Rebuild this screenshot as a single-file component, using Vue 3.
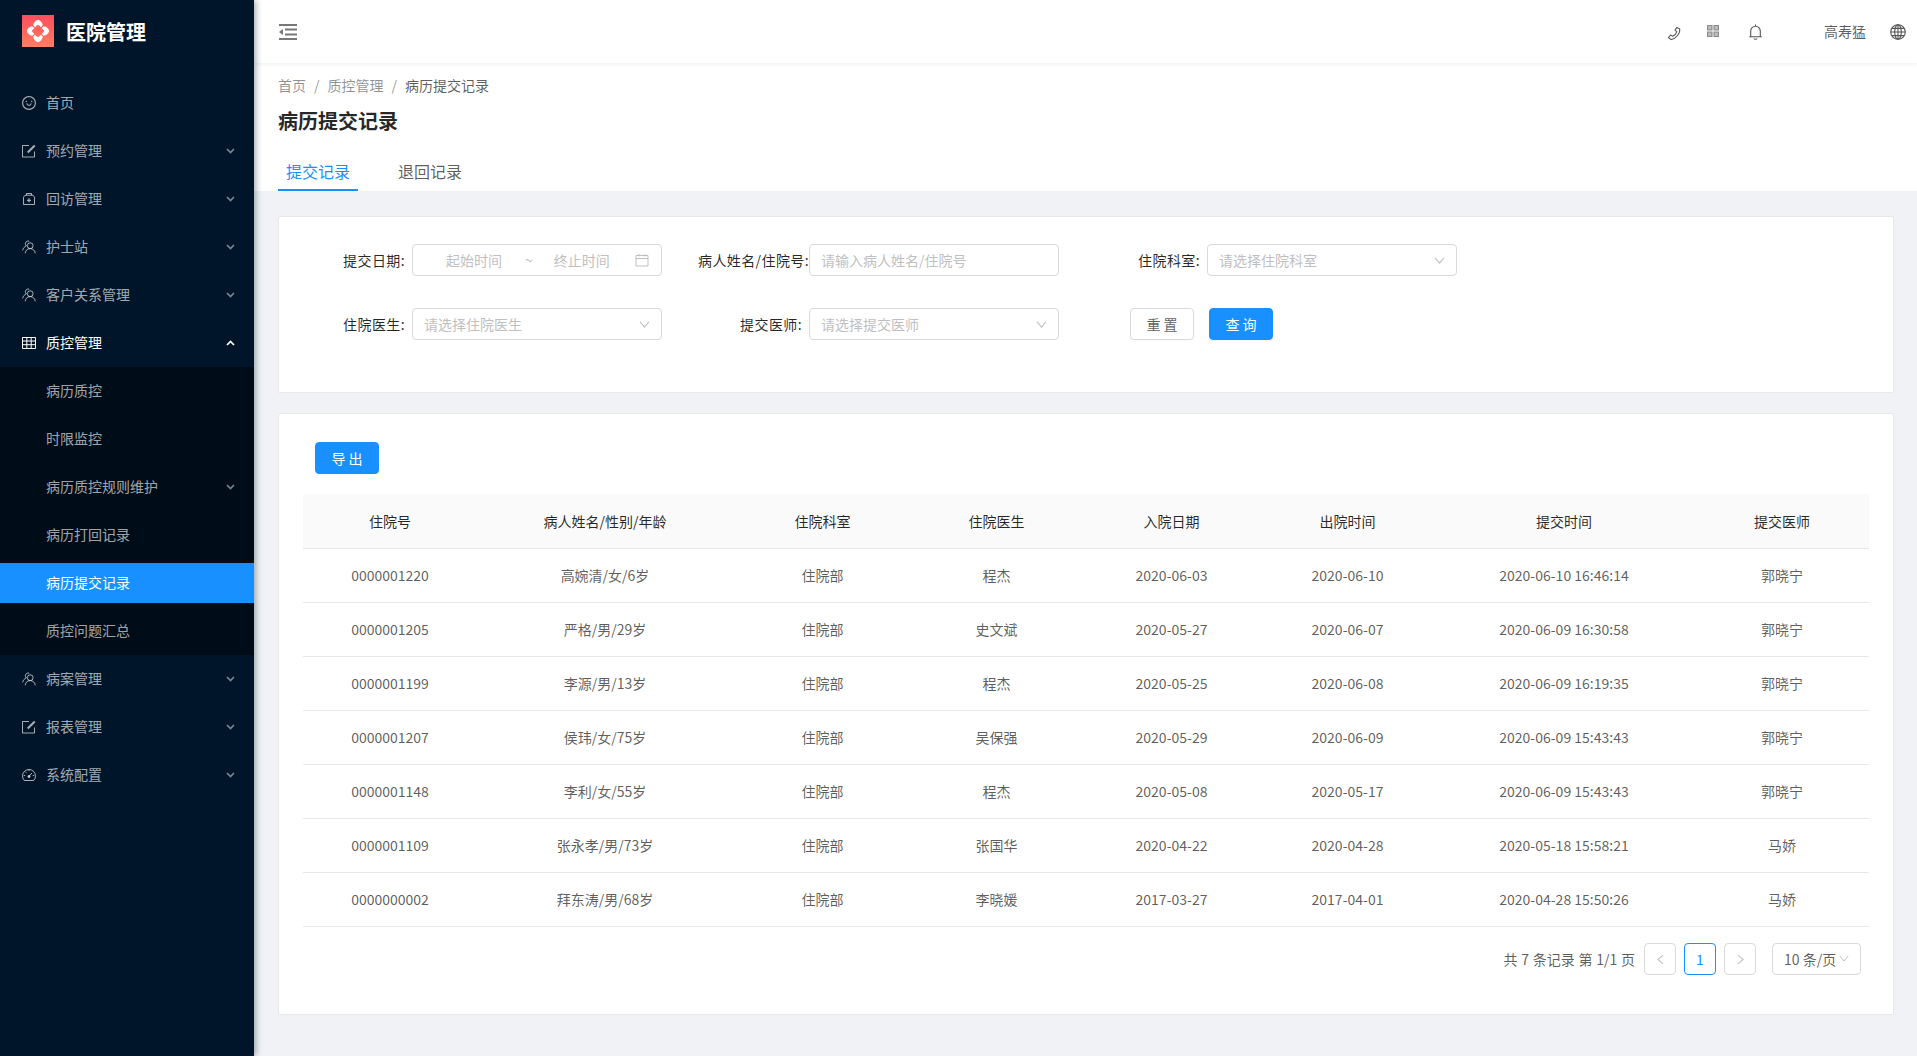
<script setup>
const menuTop = [
  { label: '首页', icon: 'smile' },
  { label: '预约管理', icon: 'form', arrow: true },
  { label: '回访管理', icon: 'medicine', arrow: true },
  { label: '护士站', icon: 'team', arrow: true },
  { label: '客户关系管理', icon: 'team', arrow: true },
]
const subMenu = [
  { label: '病历质控' },
  { label: '时限监控' },
  { label: '病历质控规则维护', arrow: true },
  { label: '病历打回记录' },
  { label: '病历提交记录', active: true },
  { label: '质控问题汇总' },
]
const menuBottom = [
  { label: '病案管理', icon: 'team', arrow: true },
  { label: '报表管理', icon: 'form', arrow: true },
  { label: '系统配置', icon: 'dashboard', arrow: true },
]
const columns = ['住院号', '病人姓名/性别/年龄', '住院科室', '住院医生', '入院日期', '出院时间', '提交时间', '提交医师']
const rows = [
  ['0000001220', '高婉清/女/6岁', '住院部', '程杰', '2020-06-03', '2020-06-10', '2020-06-10 16:46:14', '郭晓宁'],
  ['0000001205', '严格/男/29岁', '住院部', '史文斌', '2020-05-27', '2020-06-07', '2020-06-09 16:30:58', '郭晓宁'],
  ['0000001199', '李源/男/13岁', '住院部', '程杰', '2020-05-25', '2020-06-08', '2020-06-09 16:19:35', '郭晓宁'],
  ['0000001207', '侯玮/女/75岁', '住院部', '吴保强', '2020-05-29', '2020-06-09', '2020-06-09 15:43:43', '郭晓宁'],
  ['0000001148', '李利/女/55岁', '住院部', '程杰', '2020-05-08', '2020-05-17', '2020-06-09 15:43:43', '郭晓宁'],
  ['0000001109', '张永孝/男/73岁', '住院部', '张国华', '2020-04-22', '2020-04-28', '2020-05-18 15:58:21', '马娇'],
  ['0000000002', '拜东涛/男/68岁', '住院部', '李晓媛', '2017-03-27', '2017-04-01', '2020-04-28 15:50:26', '马娇'],
]
const smile = 'M288 421a48 48 0 1 0 96 0 48 48 0 1 0-96 0zm352 0a48 48 0 1 0 96 0 48 48 0 1 0-96 0zM512 64C264.6 64 64 264.6 64 512s200.6 448 448 448 448-200.6 448-448S759.4 64 512 64zm263 711c-34.2 34.2-74 61-118.3 79.8C611 874.2 562.3 884 512 884c-50.3 0-99-9.8-144.8-29.2A370.4 370.4 0 0 1 248.9 775c-34.2-34.2-61-74-79.8-118.3C149.8 611 140 562.3 140 512s9.8-99 29.2-144.8A370.4 370.4 0 0 1 249 248.9c34.2-34.2 74-61 118.3-79.8C413 149.8 461.7 140 512 140c50.3 0 99 9.8 144.8 29.2A370.4 370.4 0 0 1 775.1 249c34.2 34.2 61 74 79.8 118.3C874.2 413 884 461.7 884 512s-9.8 99-29.2 144.8A368.89 368.89 0 0 1 775 775zM664 533h-48.1c-4.2 0-7.8 3.2-8.1 7.4C604 589.9 562.5 629 512 629s-92.1-39.1-95.8-88.6c-.3-4.2-3.9-7.4-8.1-7.4H360a8 8 0 0 0-8 8.4c4.4 84.3 74.5 151.6 160 151.6s155.6-67.3 160-151.6a8 8 0 0 0-8-8.4z'
const petal = 'M11.200 10.200C11.500 7.800 13.600 5.400 16 4.800C18.400 5.400 20.500 7.800 20.800 10.200L19 12.300C18 11.300 17 10.400 16 9.800C15 10.400 14 11.300 13 12.300z'
</script>

<template>
  <div class="layout">
    <aside class="sider">
      <div class="logo">
        <svg class="logo-mark" viewBox="0 0 32 32">
          <defs>
            <linearGradient id="lg" x1="0" y1="0" x2="0" y2="1">
              <stop offset="0" stop-color="#ff4d5e" />
              <stop offset="1" stop-color="#ff7f62" />
            </linearGradient>
          </defs>
          <rect width="32" height="32" fill="url(#lg)" />
          <path fill="#fff" :d="petal" />
          <path fill="#fff" :d="petal" transform="rotate(90 16 16)" />
          <path fill="#fff" :d="petal" transform="rotate(180 16 16)" />
          <path fill="#fff" :d="petal" transform="rotate(270 16 16)" />
        </svg>
        <h1>医院管理</h1>
      </div>
      <nav class="menu">
        <div v-for="m in menuTop" :key="m.label" class="item">
          <svg class="mi" viewBox="0 0 14 14">
            <template v-if="m.icon === 'smile'"><path transform="translate(-.95 -.95) scale(.01553)" fill="currentColor" stroke="none" :d="smile" /></template>
            <template v-else-if="m.icon === 'form'"><path d="M12.500 7.500v5.500H.5V1.500h6.500" /><path d="M5.700 8.500L12.700 1.500" stroke-width="2" /></template>
            <template v-else-if="m.icon === 'medicine'"><path d="M4.500 3.200V1.500h5v1.700" /><path d="M3 3.200h8l1.500 2v7.300h-11V5.200z" /><path d="M7 6.300v4M5 8.300h4" stroke-width="1.300" /></template>
            <template v-else><circle cx="8.200" cy="5.700" r="2.900" /><path d="M3.200 13.300c.3-2.900 2.300-4.700 5-4.700s4.700 1.800 5 4.700M7.300 1.300C5.700.4 3.500 1.500 3.400 3.600c0 .9.300 1.700.9 2.200C2.400 6.600 1 8.200.7 10.400" /></template>
          </svg>
          <span class="lbl">{{ m.label }}</span>
          <svg v-if="m.arrow" class="ar" viewBox="0 0 9 6"><path d="M1 1l3.500 3.500L8 1" /></svg>
        </div>
        <div class="item open">
          <svg class="mi" viewBox="0 0 14 14"><path d="M.5 1.500h13v11H.5zM.5 5h13M.5 8.700h13M4.800 1.500v11M9.200 1.500v11" /></svg>
          <span class="lbl">质控管理</span>
          <svg class="ar up" viewBox="0 0 9 6"><path d="M1 1l3.500 3.500L8 1" /></svg>
        </div>
        <div class="sub">
          <div v-for="s in subMenu" :key="s.label" class="item subitem" :class="{ active: s.active }">
            <span class="lbl">{{ s.label }}</span>
            <svg v-if="s.arrow" class="ar" viewBox="0 0 9 6"><path d="M1 1l3.500 3.500L8 1" /></svg>
          </div>
        </div>
        <div v-for="m in menuBottom" :key="m.label" class="item">
          <svg class="mi" viewBox="0 0 14 14">
            <template v-if="m.icon === 'form'"><path d="M12.500 7.500v5.500H.5V1.500h6.500" /><path d="M5.700 8.500L12.700 1.500" stroke-width="2" /></template>
            <template v-else-if="m.icon === 'team'"><circle cx="8.200" cy="5.700" r="2.900" /><path d="M3.200 13.300c.3-2.900 2.300-4.700 5-4.700s4.700 1.800 5 4.700M7.300 1.300C5.700.4 3.500 1.500 3.400 3.600c0 .9.300 1.700.9 2.200C2.400 6.600 1 8.200.7 10.400" /></template>
            <template v-else><path d="M2.300 12.500A6.500 6.500 0 1 1 11.700 12.500z" /><path d="M7 8.200l3-3.200M7 1.500v1.400M1.800 7.500h1.400M10.800 7.500h1.400M3.300 3.700l1 1" /><circle cx="7" cy="8.500" r="1" fill="currentColor" /></template>
          </svg>
          <span class="lbl">{{ m.label }}</span>
          <svg class="ar" viewBox="0 0 9 6"><path d="M1 1l3.500 3.500L8 1" /></svg>
        </div>
      </nav>
    </aside>

    <main class="main">
      <header class="topbar">
        <svg class="fold" viewBox="0 0 18 16"><path d="M0 0h18v2H0zM0 14h18v2H0zM6 4.500h12v2H6zM6 9.500h12v2H6zM4 5v6L0 8z" /></svg>
        <div class="top-right">
          <svg class="ti phone" viewBox="0 0 16 16"><path d="M10.500 1.500L13.500 3C14.500 7 10 13.500 4.500 14.500L1.500 12.500L4 9.500L6 11C8 10 10 8 10.500 6L8.500 4.500z" /></svg>
          <svg class="ti apps" viewBox="0 0 12 12"><path d="M.5.500H5V5H.500zM7 .5h4.500V5H7zM.5 7H5v4.500H.5zM7 7h4.500v4.500H7z" /></svg>
          <svg class="ti bell" viewBox="0 0 13 16"><path d="M1.700 12.500V7a4.800 4.800 0 0 1 9.600 0v5.500M.2 12.800h12.600M6.500 2V.5M5 14.300c.4 1.300 2.600 1.300 3 0" /></svg>
          <span class="user">高寿猛</span>
          <svg class="ti globe" viewBox="0 0 16 16"><circle cx="8" cy="8" r="7.300" /><ellipse cx="8" cy="8" rx="3.300" ry="7.300" /><path d="M8 .7v14.600M.7 8h14.600M1.700 4.400h12.600M1.700 11.600h12.600" /></svg>
        </div>
      </header>

      <section class="page-head">
        <div class="crumb"><span>首页</span><i>/</i><span>质控管理</span><i>/</i><span class="cur">病历提交记录</span></div>
        <h2>病历提交记录</h2>
        <div class="tabs">
          <div class="tab on">提交记录</div>
          <div class="tab">退回记录</div>
        </div>
      </section>

      <div class="content">
        <section class="card search">
          <div class="form">
            <div class="fi">
              <label>提交日期:</label>
              <div class="ctl range">
                <span class="ph rs">起始时间</span><span class="tilde">~</span><span class="ph re">终止时间</span>
                <svg class="cal" viewBox="0 0 14 14"><path d="M1 2.500h12v10.500H1zM1 5.500h12M4 1v2.500M10 1v2.500" /></svg>
              </div>
            </div>
            <div class="fi">
              <label class="wide">病人姓名/住院号:</label>
              <div class="ctl"><span class="ph">请输入病人姓名/住院号</span></div>
            </div>
            <div class="fi">
              <label>住院科室:</label>
              <div class="ctl sel"><span class="ph">请选择住院科室</span><svg class="dn" viewBox="0 0 12 8"><path d="M1 1l5 6 5-6" /></svg></div>
            </div>
            <div class="fi">
              <label>住院医生:</label>
              <div class="ctl sel"><span class="ph">请选择住院医生</span><svg class="dn" viewBox="0 0 12 8"><path d="M1 1l5 6 5-6" /></svg></div>
            </div>
            <div class="fi">
              <label>提交医师:</label>
              <div class="ctl sel"><span class="ph">请选择提交医师</span><svg class="dn" viewBox="0 0 12 8"><path d="M1 1l5 6 5-6" /></svg></div>
            </div>
            <div class="btns">
              <button class="btn">重 置</button>
              <button class="btn primary">查 询</button>
            </div>
          </div>
        </section>

        <section class="card result">
          <button class="btn primary export">导 出</button>
          <table>
            <colgroup>
              <col class="c1" /><col class="c2" /><col class="c3" /><col class="c4" /><col class="c5" /><col class="c6" /><col class="c7" /><col class="c8" />
            </colgroup>
            <thead>
              <tr><th v-for="c in columns" :key="c">{{ c }}</th></tr>
            </thead>
            <tbody>
              <tr v-for="r in rows" :key="r[0]"><td v-for="(v, i) in r" :key="i">{{ v }}</td></tr>
            </tbody>
          </table>
          <div class="pager">
            <span class="total">共 7 条记录 第 1/1 页</span>
            <span class="pg"><svg viewBox="0 0 8 12"><path d="M7 1L1 6l6 5" /></svg></span>
            <span class="pg cur-pg">1</span>
            <span class="pg"><svg viewBox="0 0 8 12"><path d="M1 1l6 5-6 5" /></svg></span>
            <span class="size">10 条/页<svg viewBox="0 0 12 8"><path d="M1 1l5 6 5-6" /></svg></span>
          </div>
        </section>
      </div>
    </main>
  </div>
</template>

<style>
html, body { margin: 0; padding: 0; background: #f0f2f5; }
</style>

<style scoped>
* { box-sizing: border-box; }
.layout {
  display: flex;
  width: 1917px;
  height: 1056px;
  overflow: hidden;
  font-family: "Noto Sans CJK SC", "Liberation Sans", sans-serif;
  font-size: 14px;
  color: rgba(0, 0, 0, .65);
  background: #f0f2f5;
}
.sider {
  width: 254px;
  flex: none;
  background: #001529;
  box-shadow: 2px 0 6px rgba(0, 21, 41, .35);
  position: relative;
  z-index: 2;
}
.logo {
  height: 64px;
  padding: 15px 0 0 22px;
  display: flex;
  gap: 12px;
}
.logo-mark { width: 32px; height: 32px; flex: none; }
.logo h1 {
  margin: 1px 0 0;
  color: #fff;
  font-size: 20px;
  font-weight: 700;
  line-height: 32px;
}
.menu { padding-top: 19px; }
.item {
  height: 40px;
  margin-bottom: 8px;
  padding-left: 22px;
  padding-right: 19px;
  display: flex;
  align-items: center;
  color: rgba(255, 255, 255, .65);
  line-height: 40px;
}
.item.open { color: #fff; margin-bottom: 4px; }
.mi {
  width: 14px;
  height: 14px;
  margin-right: 10px;
  flex: none;
  fill: none;
  stroke: currentColor;
  stroke-width: 1;
}
.lbl { flex: 1; line-height: 38px; height: 40px; }
.ar {
  width: 9px;
  height: 6px;
  flex: none;
  fill: none;
  stroke: currentColor;
  stroke-width: 1.700;
  opacity: .75;
}
.ar.up { transform: rotate(180deg); opacity: 1; }
.sub { background: #000c17; padding-top: 4px; margin-bottom: 4px; height: 288px; }
.subitem { padding-left: 46px; }
.subitem:last-child { margin-bottom: 0; }
.subitem.active { background: #1890ff; color: #fff; }

.main { flex: 1; min-width: 0; display: flex; flex-direction: column; }
.topbar {
  height: 63px;
  flex: none;
  background: #fff;
  box-shadow: 0 1px 4px rgba(0, 21, 41, .08);
  display: flex;
  align-items: center;
  padding-left: 25px;
  position: relative;
  z-index: 1;
}
.fold { width: 18px; height: 16px; fill: #777; margin-top: 1px; }
.top-right { margin-left: auto; display: flex; align-items: center; height: 100%; }
.ti { fill: none; stroke: #555; stroke-width: 1.100; flex: none; }
.phone { width: 15px; height: 15px; margin-top: 3px; }
.apps { width: 12px; height: 12px; margin-left: 25px; margin-top: -1px; stroke: #8a8a8a; fill: #bbb; }
.bell { width: 13px; height: 16px; margin-left: 30px; margin-top: 1px; }
.user { margin-left: 62px; color: rgba(0, 0, 0, .65); padding-bottom: 1px; }
.globe { width: 16px; height: 16px; margin-left: 24px; margin-right: 11px; margin-top: 1px; }

.page-head { background: #fff; padding: 11px 0 0 24px; height: 128px; flex: none; }
.crumb { height: 22px; line-height: 22px; color: rgba(0, 0, 0, .45); }
.crumb i { font-style: normal; margin: 0 8px; }
.crumb .cur { color: rgba(0, 0, 0, .65); }
.page-head h2 {
  margin: 9px 0 0;
  font-size: 20px;
  font-weight: 700;
  line-height: 32px;
  color: rgba(0, 0, 0, .85);
}
.tabs { display: flex; gap: 32px; margin-top: 16px; }
.tab {
  padding: 0 8px;
  height: 38px;
  line-height: 36px;
  font-size: 16px;
  color: rgba(0, 0, 0, .65);
}
.tab.on { color: #1890ff; border-bottom: 2px solid #1890ff; }

.content { flex: 1; padding: 25px 23px 0 24px; display: flex; flex-direction: column; gap: 20px; }
.card { background: #fff; border: 1px solid #e8e8e8; border-radius: 2px; flex: none; }
.search { height: 177px; padding: 27px 0 0; }
.form {
  display: grid;
  grid-template-columns: 397px 398px 397px;
  row-gap: 32px;
}
.fi { display: flex; align-items: center; height: 32px; }
.fi label {
  width: 126px;
  margin-right: 7px;
  text-align: right;
  color: rgba(0, 0, 0, .85);
  white-space: nowrap;
  flex: none;
  padding-bottom: 1px;
  letter-spacing: .4px;
}
.fi label.wide { margin-right: 0; width: 133px; }
.ctl {
  width: 250px;
  height: 32px;
  border: 1px solid #d9d9d9;
  border-radius: 4px;
  padding: 0 11px;
  display: flex;
  align-items: center;
  position: relative;
  background: #fff;
}
.ph { color: #bfbfbf; padding-bottom: 1px; }
.rs { margin-left: 22px; }
.tilde { color: #bfbfbf; margin-left: 23px; }
.re { margin-left: 21px; }
.cal { position: absolute; right: 12px; top: 8px; width: 14px; height: 14px; fill: none; stroke: #bfbfbf; stroke-width: 1; }
.dn { position: absolute; right: 11px; top: 12px; width: 11px; height: 7px; fill: none; stroke: #bfbfbf; stroke-width: 1.200; }
.btns { margin-left: 56px; display: flex; gap: 15px; }
.btn {
  width: 64px;
  height: 32px;
  padding: 0;
  border: 1px solid #d9d9d9;
  border-radius: 4px;
  background: #fff;
  color: rgba(0, 0, 0, .65);
  font: inherit;
  box-shadow: 0 2px 0 rgba(0, 0, 0, .015);
}
.btn.primary { background: #1890ff; border-color: #1890ff; color: #fff; }
.result { height: 602px; padding: 28px 24px 0; position: relative; }
.export { margin-left: 12px; display: block; }
table {
  width: 1566px;
  table-layout: fixed;
  border-collapse: collapse;
  margin-top: 20px;
  text-align: center;
}
.c1 { width: 174px; }
.c2 { width: 256px; }
.c3 { width: 179px; }
.c4 { width: 169px; }
.c5 { width: 181px; }
.c6 { width: 171px; }
.c7 { width: 262px; }
.c8 { width: 174px; }
th, td { padding: 0; }
th {
  height: 54px;
  background: #fafafa;
  font-weight: 400;
  color: rgba(0, 0, 0, .85);
  border-bottom: 1px solid #e8e8e8;
}
td { height: 54px; border-bottom: 1px solid #e8e8e8; }
.pager {
  display: flex;
  align-items: center;
  justify-content: flex-end;
  margin-top: 16px;
  margin-right: 8px;
  height: 32px;
}
.total { margin-right: 9px; word-spacing: .6px; }
.pg {
  width: 32px;
  height: 32px;
  border: 1px solid #d9d9d9;
  border-radius: 4px;
  margin-right: 8px;
  display: flex;
  align-items: center;
  justify-content: center;
  color: #bfbfbf;
}
.pg svg { width: 7px; height: 11px; fill: none; stroke: #bfbfbf; stroke-width: 1.200; margin-top: 1px; }
.cur-pg { border-color: #1890ff; color: #1890ff; }
.size {
  width: 89px;
  height: 32px;
  margin-left: 8px;
  border: 1px solid #d9d9d9;
  border-radius: 4px;
  padding-left: 11px;
  display: flex;
  align-items: center;
  white-space: nowrap;
}
.size svg { width: 10px; height: 7px; margin-left: 3px; fill: none; stroke: #bfbfbf; stroke-width: 1.200; flex: none; }
</style>
